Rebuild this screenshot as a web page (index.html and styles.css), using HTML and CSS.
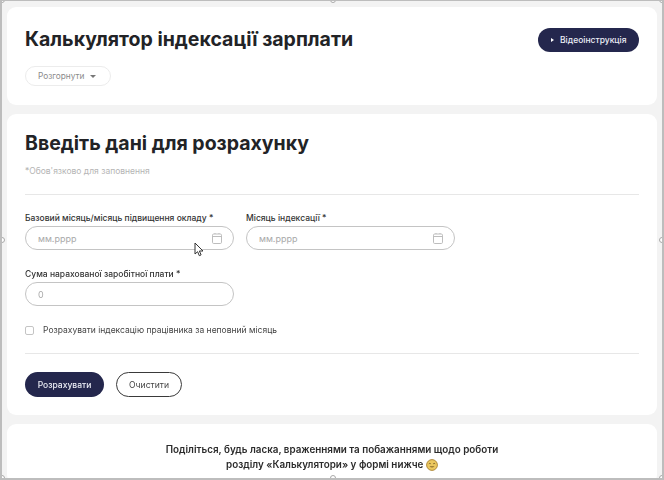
FILE: index.html
```html
<!DOCTYPE html>
<html lang="uk">
<head>
<meta charset="utf-8">
<title>Калькулятор індексації зарплати</title>
<link rel="stylesheet" href="styles.css">
</head>
<body>
<div class="frame">
  <main class="page">
    <section class="card head-card">
      <div class="head-row">
        <h1 class="title">Калькулятор індексації зарплати</h1>
        <button class="btn btn-video"><span class="play"></span>Відеоінструкція</button>
      </div>
      <button class="expand">Розгорнути<span class="caret"></span></button>
    </section>
    <section class="card form-card">
      <h2 class="form-title">Введіть дані для розрахунку</h2>
      <p class="hint">*Обов'язково для заповнення</p>
      <hr class="rule rule-top">
      <div class="field-row">
        <div class="field">
          <label class="label">Базовий місяць/місяць підвищення окладу *</label>
          <div class="input"><span class="ph">мм.рррр</span>
            <svg class="cal" viewBox="0 0 10 11" width="10" height="11"><rect x=".5" y="1" width="9" height="9.5" rx="1.2"/><path d="M.5 3.5h9M3 0v1M7 0v1"/></svg>
          </div>
        </div>
        <div class="field">
          <label class="label">Місяць індексації *</label>
          <div class="input"><span class="ph">мм.рррр</span>
            <svg class="cal" viewBox="0 0 10 11" width="10" height="11"><rect x=".5" y="1" width="9" height="9.5" rx="1.2"/><path d="M.5 3.5h9M3 0v1M7 0v1"/></svg>
          </div>
        </div>
      </div>
      <div class="field field-sum">
        <label class="label">Сума нарахованої заробітної плати *</label>
        <div class="input"><span class="ph">0</span></div>
      </div>
      <label class="check"><span class="box"></span>Розрахувати індексацію працівника за неповний місяць</label>
      <hr class="rule rule-bottom">
      <div class="actions">
        <button class="btn btn-primary">Розрахувати</button>
        <button class="btn btn-outline">Очистити</button>
      </div>
    </section>
    <section class="card feedback-card">
      <p class="feedback">Поділіться, будь ласка, враженнями та побажаннями щодо роботи<br>розділу «Калькулятори» у формі нижче <svg class="emoji" viewBox="0 0 12 12" width="12" height="12"><circle cx="6" cy="6" r="5.4" fill="#ecc85f" stroke="#a9812f" stroke-width=".9"/><path d="M2.8 4.8q1-.9 2 0M7.2 4.8q1-.9 2 0" fill="none" stroke="#6d5220" stroke-width=".8"/><path d="M3.4 7.2q2.6 2.4 5.2 0z" fill="#8a6a2a"/></svg></p>
    </section>
  </main>
  <svg class="cursor" viewBox="0 0 10 15" width="10" height="15"><path d="M1 1v11l2.6-2.3 1.7 4 1.8-.8-1.7-3.9H9z"/></svg>
  <span class="handle h-tl"></span><span class="handle h-t"></span><span class="handle h-tr"></span>
  <span class="handle h-l"></span><span class="handle h-r"></span>
  <span class="handle h-bl"></span><span class="handle h-b"></span><span class="handle h-br"></span>
</div>
</body>
</html>
```

FILE: styles.css
```css
* { box-sizing: border-box; }
html, body { margin: 0; padding: 0; }
body { width: 664px; height: 480px; overflow: hidden; background: #fff; font-family: Inter, "Noto Sans", sans-serif; color: #222; }
.frame { position: relative; width: 664px; height: 480px; overflow: hidden; background: #f3f3f3; border: 1px solid #bdbdbd; border-width: 1px 2px 2px 2px; }
.page { display: flex; flex-direction: column; gap: 9px; padding: 6px 5px 0 5px; filter: blur(.4px); }
.card { background: #fff; border-radius: 9px; padding: 0 18px; }
.head-card { height: 98px; padding-top: 20px; }
.head-row { display: flex; justify-content: space-between; align-items: flex-start; }
.title { margin: 0; font-size: 19.5px; line-height: 24px; font-weight: 700; color: #222326; }
.btn { font-family: inherit; border-radius: 13px; cursor: pointer; }
.btn-video { display: flex; align-items: center; gap: 6px; height: 24px; width: 101px; padding: 0 0 0 13px; margin: 1px 0 0; border: 0; background: #24274d; color: #eceef6; font-size: 8.5px; font-weight: 500; }
.play { width: 0; height: 0; border-left: 3.5px solid #fff; border-top: 2.5px solid transparent; border-bottom: 2.5px solid transparent; }
.expand { display: flex; align-items: center; gap: 6px; margin-top: 14px; height: 20px; width: 86px; padding: 0 0 0 12px; border: 1px solid #ececec; border-radius: 10px; background: #fff; font-family: inherit; font-size: 8.3px; color: #8a8a8a; }
.caret { width: 0; height: 0; border-top: 3px solid #777; border-left: 3px solid transparent; border-right: 3px solid transparent; }
.form-card { height: 301px; padding-top: 17px; }
.form-title { margin: 0; font-size: 19.5px; line-height: 24px; font-weight: 700; color: #222326; }
.hint { margin: 10px 0 0; font-size: 8.5px; line-height: 12px; color: #b5b5b5; }
.rule { margin: 0; border: 0; height: 1px; background: #e7e7e7; }
.rule-top { margin-top: 17px; }
.field-row { display: flex; gap: 12px; margin-top: 17px; }
.field { width: 209px; }
.label { display: block; font-size: 8.5px; line-height: 12px; color: #333; font-weight: 500; }
.input { display: flex; align-items: center; justify-content: space-between; height: 24px; margin-top: 2px; padding: 0 11px 0 12px; border: 1px solid #c4c4c4; border-radius: 12px; background: #fff; }
.ph { font-size: 9px; color: #a9a9a9; }
.cal { fill: none; stroke: #bdbdbd; stroke-width: 1; }
.field-sum { margin-top: 18px; }
.check { display: flex; align-items: center; gap: 9px; margin-top: 18px; font-size: 8.5px; line-height: 12px; color: #444; }
.box { width: 9px; height: 9px; border: 1px solid #c4c4c4; border-radius: 2px; background: #fff; }
.rule-bottom { margin-top: 17px; }
.actions { display: flex; gap: 12px; margin-top: 18px; }
.btn-primary { width: 79px; height: 25px; padding: 0; border: 0; background: #24274d; color: #eceef6; font-size: 8.5px; font-weight: 500; }
.btn-outline { width: 66px; height: 25px; padding: 0; border: 1px solid #3a3a3a; background: #fff; color: #444; font-size: 8.6px; }
.feedback-card { height: 60px; padding-top: 18px; }
.feedback { margin: 0; text-align: center; font-size: 9.85px; line-height: 15px; font-weight: 600; color: #2b2b2b; }
.emoji { vertical-align: -2.5px; }
.cursor { position: absolute; left: 192px; top: 241px; fill: #fff; stroke: #333; stroke-width: 1; }
.handle { position: absolute; width: 6px; height: 6px; border: 1px solid #a8a8a8; border-radius: 50%; background: #fff; }
.h-tl { left: -3px; top: -4px; } .h-t { left: 328px; top: -4px; } .h-tr { right: -3px; top: -4px; }
.h-l { left: -3px; top: 236px; } .h-r { right: -3px; top: 236px; }
.h-bl { left: -3px; bottom: -3px; } .h-b { left: 328px; bottom: -3px; } .h-br { right: -3px; bottom: -3px; }
```
